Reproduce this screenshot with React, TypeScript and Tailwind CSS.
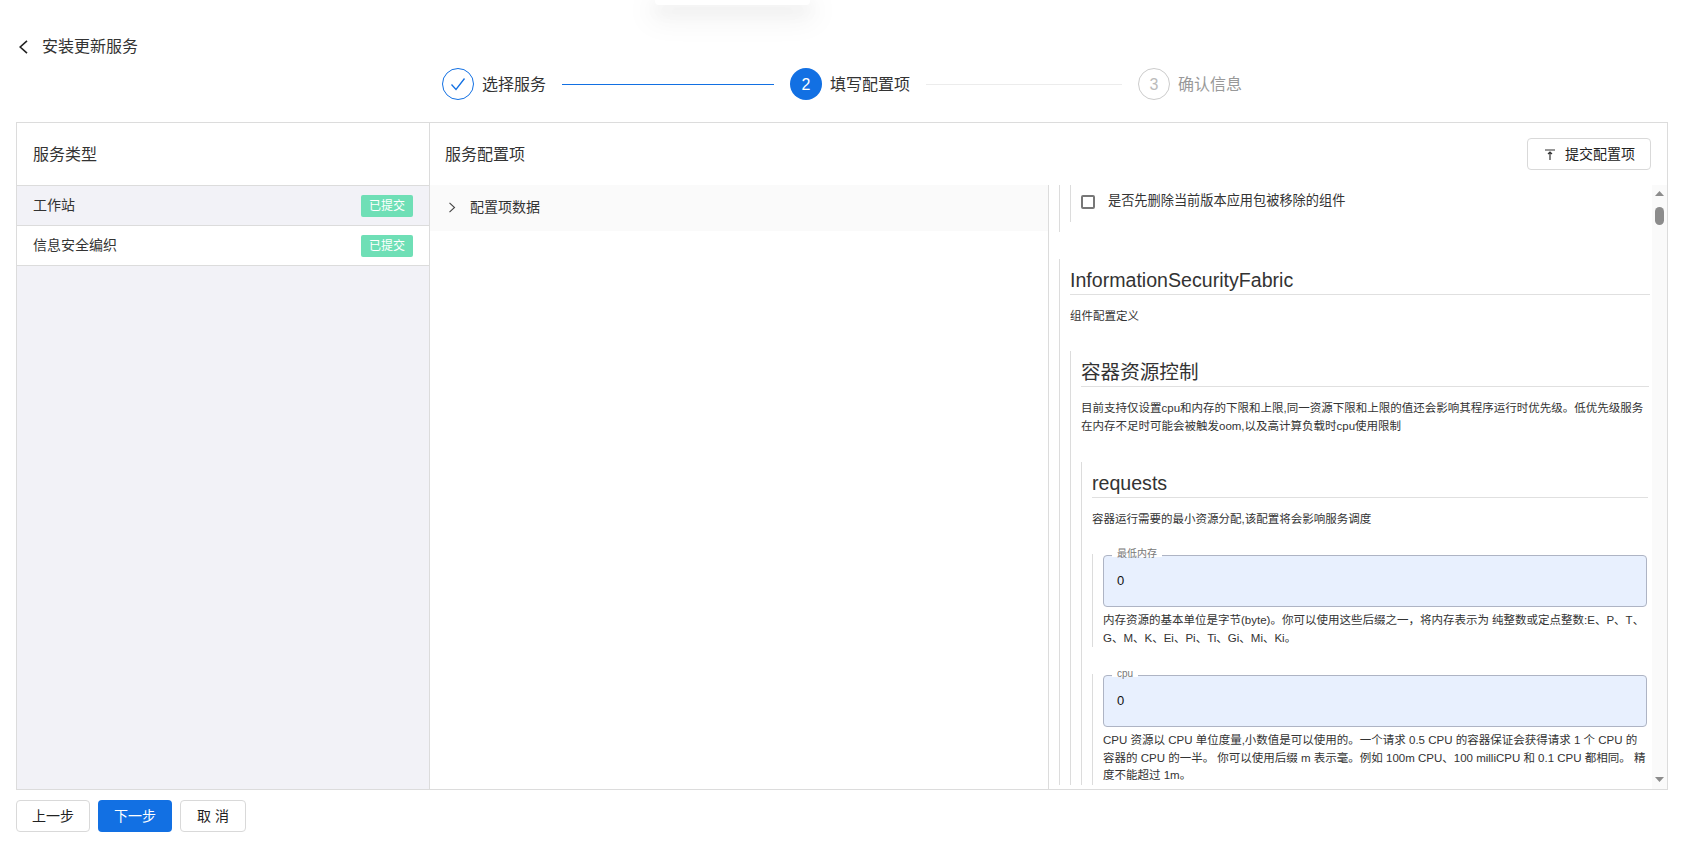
import React from "react";

function FieldInput({ label, gap }: { label: string; gap: string }) {
  return (
    <div className="relative h-[52px] rounded-[4px] border border-[#aeb4c4] bg-[#e8f0fe] pl-[13px] flex items-center text-[13px] text-[#111]">
      <span className={`absolute -top-[1px] left-[8px] h-[2px] bg-white ${gap}`} />
      <span className="absolute -top-[9px] left-[13px] text-[10px] leading-[14px] text-[#777]">{label}</span>
      0
    </div>
  );
}

function Heading({ children }: { children: React.ReactNode }) {
  return (
    <div className="h-[36px] pt-[8px] border-b border-[#e0e0e0] text-[19.6px] leading-[26px] text-[#333] whitespace-nowrap">
      {children}
    </div>
  );
}

function Desc({ children, className = "" }: { children: React.ReactNode; className?: string }) {
  return <p className={`text-[11.5px] whitespace-nowrap text-[#333] ${className}`}>{children}</p>;
}

function Row({ name, active }: { name: string; active?: boolean }) {
  return (
    <div className={`h-[40px] pl-[16px] pr-[16px] border-b border-[#dcdcdc] flex items-center justify-between text-[14px] text-[#333] ${active ? "bg-[#f2f2f7]" : "bg-white"}`}>
      <span>{name}</span>
      <span className="w-[52px] h-[22px] rounded-[2px] bg-[#6fdfb6] text-white text-[12px] flex items-center justify-center">已提交</span>
    </div>
  );
}

function Btn({ children, primary, w }: { children: React.ReactNode; primary?: boolean; w: string }) {
  return (
    <button className={`h-[32px] rounded-[4px] text-[14px] flex items-center justify-center ${w} ${primary ? "bg-[#1270e3] text-white" : "bg-white text-[#222] border border-[#d9d9d9]"}`}>
      {children}
    </button>
  );
}

export default function App() {
  return (
    <div className="relative w-full h-[855px] bg-white overflow-hidden font-['Liberation_Sans','Noto_Sans_CJK_SC',sans-serif]">
      {/* fading toast at the top */}
      <div className="absolute top-0 left-[655px] w-[155px] h-[5px] bg-white rounded-b-[4px] shadow-[0_6px_16px_0_rgba(0,0,0,0.08),0_3px_6px_-4px_rgba(0,0,0,0.12),0_9px_28px_8px_rgba(0,0,0,0.05)]" />

      {/* title */}
      <div className="pt-[35px] pl-[18px] h-[58px] flex items-start">
        <div className="h-[24px] flex items-center gap-[13px] text-[16px] text-[#333]">
          <svg width="11" height="14" viewBox="0 0 11 14" fill="none" stroke="#222" strokeWidth="1.6">
            <path d="M9 0.8L2.2 7L9 13.2" />
          </svg>
          <span>安装更新服务</span>
        </div>
      </div>

      {/* steps */}
      <div className="mt-[10px] h-[32px] pl-[442px] flex items-center text-[16px]">
        <div className="w-[32px] h-[32px] rounded-full border border-[#1270e3] flex items-center justify-center">
          <svg width="16" height="14" viewBox="0 0 16 14" fill="none" stroke="#1270e3" strokeWidth="1.3">
            <path d="M1.5 7.5L6 12.5L14.5 1.5" />
          </svg>
        </div>
        <span className="ml-[8px] pt-[2px] text-[#333]">选择服务</span>
        <div className="ml-[16px] w-[212px] h-px bg-[#1270e3]" />
        <div className="ml-[16px] w-[32px] h-[32px] pt-[2px] rounded-full bg-[#1270e3] text-white flex items-center justify-center">2</div>
        <span className="ml-[8px] pt-[2px] text-[#333]">填写配置项</span>
        <div className="ml-[16px] w-[196px] h-px bg-[#ececec]" />
        <div className="ml-[16px] w-[32px] h-[32px] pt-[2px] rounded-full border border-[#cccccc] text-[#bbbbbb] flex items-center justify-center">3</div>
        <span className="ml-[8px] pt-[2px] text-[#999999]">确认信息</span>
      </div>

      {/* panel */}
      <div className="mt-[22px] ml-[16px] w-[1652px] h-[668px] border border-[#dcdcdc] flex">
        <div className="w-[413px] shrink-0 border-r border-[#dcdcdc] bg-[#f2f2f7] flex flex-col">
          <div className="h-[63px] pl-[16px] pt-[2px] bg-white border-b border-[#dcdcdc] flex items-center text-[16px] text-[#333]">服务类型</div>
          <Row name="工作站" active />
          <Row name="信息安全编织" />
        </div>

        <div className="flex-1 min-w-0 flex flex-col">
          <div className="h-[62px] shrink-0 pl-[15px] pr-[16px] flex items-center justify-between text-[16px] text-[#333]">
            <span className="pt-[2px]">服务配置项</span>
            <button className="w-[124px] h-[32px] rounded-[4px] border border-[#d9d9d9] bg-white text-[14px] text-[#222] flex items-center pl-[17px] gap-[10px]">
              <svg width="10" height="11" viewBox="0 0 10 11" fill="none" stroke="#333" strokeWidth="1.2">
                <path d="M0 1H10M5 3V11M3 5L5 3L7 5" />
              </svg>
              提交配置项
            </button>
          </div>

          <div className="flex-1 min-h-0 flex">
            {/* middle column */}
            <div className="w-[619px] shrink-0 border-r border-[#dcdcdc]">
              <div className="h-[46px] pb-[2px] bg-[#fafafa] pl-[18px] flex items-center text-[14px] text-[#333] gap-[14px]">
                <svg width="8" height="11" viewBox="0 0 8 11" fill="none" stroke="#444" strokeWidth="1.1">
                  <path d="M1.5 0.8L6.5 5.5L1.5 10.2" />
                </svg>
                配置项数据
              </div>
            </div>

            {/* right column */}
            <div className="flex-1 min-w-0 flex">
              <div className="flex-1 min-w-0 overflow-hidden pl-[10px] pr-[2px]">
                <div className="h-[47px] border-l border-[#dcdcdc] pl-[10px]">
                  <div className="h-[37px] border-l border-[#dcdcdc] pl-[10px] pt-[10px] flex items-start text-[13.2px] leading-[14px] text-[#333]">
                    <span className="w-[14px] h-[14px] rounded-[2px] border-2 border-[#777] shrink-0" />
                    <span className="ml-[13px] -mt-[1px] whitespace-nowrap">是否先删除当前版本应用包被移除的组件</span>
                  </div>
                </div>

                <div className="mt-[27px] border-l border-[#dcdcdc] pl-[10px]">
                  <Heading>InformationSecurityFabric</Heading>
                  <Desc className="mt-[12px] leading-[18px]">组件配置定义</Desc>

                  <div className="mt-[26px] mr-[1px] border-l border-[#dcdcdc] pl-[10px]">
                    <Heading>容器资源控制</Heading>
                    <Desc className="mt-[12px] leading-[18px]">
                      目前支持仅设置cpu和内存的下限和上限,同一资源下限和上限的值还会影响其程序运行时优先级。低优先级服务<br />
                      在内存不足时可能会被触发oom,以及高计算负载时cpu使用限制
                    </Desc>

                    <div className="mt-[27px] mr-[1px] border-l border-[#dcdcdc] pl-[10px]">
                      <Heading>requests</Heading>
                      <Desc className="mt-[12px] leading-[18px]">容器运行需要的最小资源分配,该配置将会影响服务调度</Desc>

                      <div className="mt-[26px] mr-[1px] border-l border-[#dcdcdc] pl-[10px] pt-[1px]">
                        <FieldInput label="最低内存" gap="w-[50px]" />
                        <Desc className="mt-[5px] leading-[17.5px]">
                          内存资源的基本单位是字节(byte)。你可以使用这些后缀之一，将内存表示为 纯整数或定点整数:E、P、T、<br />
                          G、M、K、Ei、Pi、Ti、Gi、Mi、Ki。
                        </Desc>
                      </div>

                      <div className="mt-[27px] mr-[1px] border-l border-[#dcdcdc] pl-[10px] pt-[1px]">
                        <FieldInput label="cpu" gap="w-[26px]" />
                        <Desc className="mt-[5px] leading-[17.5px]">
                          CPU 资源以 CPU 单位度量,小数值是可以使用的。一个请求 0.5 CPU 的容器保证会获得请求 1 个 CPU 的<br />
                          容器的 CPU 的一半。 你可以使用后缀 m 表示毫。例如 100m CPU、100 milliCPU 和 0.1 CPU 都相同。 精<br />
                          度不能超过 1m。
                        </Desc>
                      </div>
                    </div>
                  </div>
                </div>
              </div>

              {/* scrollbar */}
              <div className="w-[15px] shrink-0 bg-[#fafafa] flex flex-col items-center pt-[6px] pb-[7px]">
                <svg width="9" height="5" viewBox="0 0 9 5" fill="#8c8c8c"><path d="M4.5 0L9 5H0Z" /></svg>
                <div className="mt-[11px] w-[9px] h-[18px] rounded-full bg-[#8c8c8c]" />
                <svg className="mt-auto" width="9" height="5" viewBox="0 0 9 5" fill="#8c8c8c"><path d="M0 0H9L4.5 5Z" /></svg>
              </div>
            </div>
          </div>
        </div>
      </div>

      {/* bottom buttons */}
      <div className="mt-[10px] pl-[16px] flex gap-[8px]">
        <Btn w="w-[74px]">上一步</Btn>
        <Btn w="w-[74px]" primary>下一步</Btn>
        <Btn w="w-[66px]">取 消</Btn>
      </div>
    </div>
  );
}
